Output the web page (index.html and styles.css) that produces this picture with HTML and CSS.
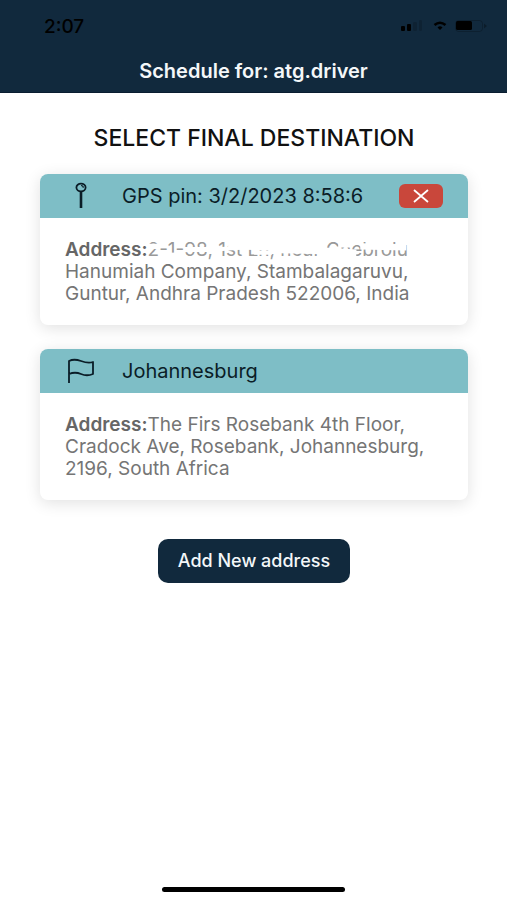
FILE: index.html
```html
<!DOCTYPE html>
<html lang="en">
<head>
<meta charset="utf-8">
<meta name="viewport" content="width=device-width, initial-scale=1">
<title>Schedule for: atg.driver</title>
<link rel="stylesheet" href="styles.css">
</head>
<body>
<header class="top">
  <div class="status">
    <span class="time">2:07</span>
    <span class="indicators">
      <svg width="24" height="12" viewBox="0 0 24 12" aria-hidden="true">
        <rect x="0" y="6" width="4" height="5" rx="1"/><rect x="6" y="4" width="4" height="7" rx="1"/>
        <rect x="12" y="2" width="4" height="9" rx="1" opacity=".15"/><rect x="18" y="0" width="3" height="11" rx="1" opacity=".15"/>
      </svg>
      <svg width="14" height="10" viewBox="0 0 14 10" aria-hidden="true">
        <path d="M1.500 4Q7 -.5 12.500 4" fill="none" stroke="#000" stroke-width="2.600"/><path d="M4.500 6.500Q7 4 9.500 6.500L7 9Z"/>
      </svg>
      <svg width="32" height="12" viewBox="0 0 32 12" aria-hidden="true">
        <rect x=".5" y=".5" width="27" height="11" rx="3" fill="none" stroke="#000" opacity=".2"/><rect x="1" y="1" width="16" height="9" rx="1.500"/><path d="M29 3.500L32 6L29 8.500Z" opacity=".3"/>
      </svg>
    </span>
  </div>
  <h1 class="screen-title">Schedule for: atg.driver</h1>
</header>
<main class="content">
  <h2 class="heading">SELECT FINAL DESTINATION</h2>
  <section class="card">
    <div class="card-head">
      <svg class="icon" width="30" height="28" viewBox="0 0 30 28" aria-hidden="true">
        <ellipse cx="16" cy="5.500" rx="4.600" ry="3.800" fill="none" stroke="#0b1d27" stroke-width="1.800"/>
        <path d="M16 3.500Q18.300 3.600 18.300 5.700" fill="none" stroke="#0b1d27" stroke-width="1.200"/>
        <path d="M16 9.500V26" stroke="#0b1d27" stroke-width="2.600"/>
      </svg>
      <h3 class="name">GPS pin: 3/2/2023 8:58:6</h3>
      <button class="remove" type="button" aria-label="Remove">
        <svg width="16" height="14" viewBox="0 0 16 14" aria-hidden="true"><path d="M1 1L15 13M15 1L1 13" stroke="#fff" stroke-width="1.800"/></svg>
      </button>
    </div>
    <p class="address"><b>Address:</b><span class="erased">2-1-98, 1st Ln, near Chebrolu<svg class="smudge" viewBox="0 0 260 22" preserveAspectRatio="none" aria-hidden="true"><g fill="none" stroke="#fff"><path d="M0 8H12M36 11H66" stroke-width="5"/><path d="M18 17H30" stroke-width="6"/><path d="M68 11L94 9" stroke-width="4"/><path d="M80 7L132 8" stroke-width="8"/><path d="M106 14H124" stroke-width="4"/><path d="M130 10L178 11" stroke-width="9"/><path d="M176 13L208 15" stroke-width="8"/><path d="M190 6H204M212 8L258 9" stroke-width="6"/></g></svg></span><br>Hanumiah Company, Stambalagaruvu,<br>Guntur, Andhra Pradesh 522006, India</p>
  </section>
  <section class="card">
    <div class="card-head">
      <svg class="icon" width="30" height="28" viewBox="0 0 30 28" aria-hidden="true">
        <path d="M4 26V4Q9 1.500 16 4T28 5V17Q22 19.500 16 17T4 17" fill="none" stroke="#0b1d27" stroke-width="1.800" stroke-linejoin="round"/>
      </svg>
      <h3 class="name">Johannesburg</h3>
    </div>
    <p class="address"><b>Address:</b>The Firs Rosebank 4th Floor,<br>Cradock Ave, Rosebank, Johannesburg,<br>2196, South Africa</p>
  </section>
  <button class="add" type="button">Add New address</button>
</main>
<div class="home-bar"></div>
</body>
</html>
```
FILE: styles.css
```css
* { box-sizing: border-box; }
body {
  margin: 0;
  min-height: 100vh;
  display: flex;
  flex-direction: column;
  background: #fff;
  color: #0b1d27;
  font-family: Inter, "Liberation Sans", sans-serif;
}
h1, h2, h3, p { margin: 0; }
svg { display: block; }
.top {
  padding: 14px 20px 9px 44px;
  background: #11293d;
  border-bottom: 1px solid #0a1d30;
}
.status {
  display: flex;
  justify-content: space-between;
  align-items: center;
  height: 24px;
  color: #000;
}
.time { font-size: 19px; font-weight: 500; }
.indicators { display: flex; align-items: center; gap: 8px; }
.screen-title {
  margin: 21px 24px 0 0;
  color: #f4f7f9;
  font-size: 20px;
  line-height: 24px;
  font-weight: 600;
  text-align: center;
}
.content {
  flex: 1;
  display: flex;
  flex-direction: column;
  align-items: center;
  gap: 24px;
  padding: 33px 39px 32px 40px;
}
.heading {
  color: #111;
  font-size: 23px;
  line-height: 24px;
  font-weight: 500;
}
.card {
  width: 100%;
  border-radius: 8px;
  background: #fff;
  box-shadow: 0 3px 16px rgba(0, 0, 0, .12);
}
.card-head {
  display: flex;
  align-items: center;
  height: 44px;
  padding: 0 25px;
  border-radius: 8px 8px 0 0;
  background: #7ebec6;
}
.icon { margin-right: 27px; }
.name {
  flex: 1;
  font-size: 20px;
  line-height: 24px;
  font-weight: 400;
}
.remove {
  display: grid;
  place-items: center;
  width: 44px;
  height: 24px;
  padding: 0;
  border: 0;
  border-radius: 6px;
  background: #c9473b;
}
.address {
  padding: 21px 25px 20px;
  color: #757575;
  font-size: 19px;
  line-height: 22px;
  white-space: nowrap;
}
.address b { color: #666; font-weight: 600; }
.erased { position: relative; color: #999; }
.smudge {
  position: absolute;
  inset: 0;
  width: 100%;
  height: 100%;
}
.add {
  margin-top: 15px;
  height: 44px;
  padding: 0 20px;
  border: 0;
  border-radius: 10px;
  background: #11293d;
  color: #f4f7f9;
  font: 500 18px/24px Inter, "Liberation Sans", sans-serif;
}
.home-bar {
  align-self: center;
  width: 36%;
  height: 5px;
  margin-bottom: 8px;
  border-radius: 3px;
  background: #000;
}
```
